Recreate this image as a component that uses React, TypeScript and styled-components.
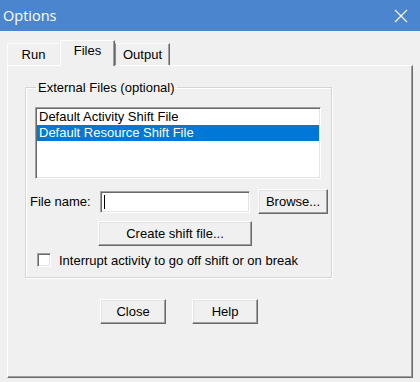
import React, { useState } from 'react'
import styled, { createGlobalStyle } from 'styled-components'

const GlobalStyle = createGlobalStyle`
  html, body {
    margin: 0;
    padding: 0;
    background: #f0f0f0;
  }
  * {
    box-sizing: border-box;
  }
`

const uiFont = `"Liberation Sans", Arial, sans-serif`

const Window = styled.div`
  display: flex;
  flex-direction: column;
  width: 420px;
  height: 382px;
  background: #f0f0f0;
  font-family: ${uiFont};
  font-size: 13px;
  color: #000;
  overflow: hidden;
`

const TitleBar = styled.div`
  display: flex;
  align-items: center;
  justify-content: space-between;
  height: 31px;
  padding: 0 12px 0 3px;
  background: #4a85cd;
  color: #fff;
  font-family: "Open Sans", "Noto Sans", sans-serif;
  font-size: 14.5px;
`

const CloseGlyph = styled.svg`
  width: 14px;
  height: 14px;
`

const Body = styled.div`
  display: flex;
  flex-direction: column;
  padding: 9px 7px 0 7px;
`

const TabStrip = styled.div`
  display: flex;
  align-items: flex-end;
  height: 25px;
  position: relative;
  z-index: 1;
`

const Tab = styled.div<{ $active?: boolean; $width: number }>`
  display: flex;
  align-items: center;
  justify-content: center;
  width: ${({ $width }) => $width}px;
  height: ${({ $active }) => ($active ? 26 : 22)}px;
  margin-bottom: ${({ $active }) => ($active ? -1 : 0)}px;
  padding-bottom: ${({ $active }) => ($active ? 6 : 1)}px;
  background: #f0f0f0;
  border-top: 1px solid ${({ $active }) => ($active ? '#fff' : '#fcfcfc')};
  border-left: 1px solid ${({ $active }) => ($active ? '#fff' : '#fcfcfc')};
  border-right: 1px solid ${({ $active }) => ($active ? '#696969' : '#e8e8e8')};
  box-shadow: ${({ $active }) => ($active ? 'inset -1px 0 0 #a0a0a0' : 'none')};
`

const OutputTab = styled(Tab)`
  border-left: 1px solid #8a8a8a;
  border-right: 1px solid #696969;
  box-shadow: inset -1px 0 0 #a0a0a0;
`

const Panel = styled.div`
  display: flex;
  flex-direction: column;
  height: 313px;
  padding: 14px 0 0 17px;
  border-top: 1px solid #fff;
  border-left: 1px solid #fff;
  border-right: 1px solid #696969;
  border-bottom: 1px solid #696969;
  box-shadow: inset -1px -1px 0 #a0a0a0;
`

const GroupBox = styled.fieldset`
  width: 307px;
  height: 198px;
  margin: 0;
  padding: 0;
  border: 1px solid #d5d5d5;
  box-shadow: inset 1px 1px 0 #fff, 1px 1px 0 #fff;
`

const Legend = styled.legend`
  margin-left: 10px;
  padding: 0 2px;
  line-height: 15px;
`

const GroupContent = styled.div`
  display: flex;
  flex-direction: column;
  padding: 12px 0 0 4px;
`

const ListBox = styled.div`
  display: flex;
  flex-direction: column;
  width: 286px;
  height: 72px;
  margin-left: 5px;
  padding: 1px;
  background: #fff;
  border-top: 1px solid #a0a0a0;
  border-left: 1px solid #a0a0a0;
  border-right: 1px solid #fff;
  border-bottom: 1px solid #fff;
  box-shadow: inset 1px 1px 0 #696969, inset -1px -1px 0 #e3e3e3;
`

const ListItem = styled.div<{ $selected?: boolean }>`
  height: 16px;
  line-height: 16px;
  padding-left: 2px;
  background: ${({ $selected }) => ($selected ? '#0078d7' : 'transparent')};
  color: ${({ $selected }) => ($selected ? '#fff' : '#000')};
  white-space: nowrap;
`

const FileRow = styled.div`
  display: flex;
  align-items: center;
  margin-top: 10px;
  height: 25px;
`

const FieldLabel = styled.span`
  width: 70px;
`

const TextInput = styled.div`
  width: 150px;
  height: 22px;
  margin-right: 8px;
  padding: 3px 3px;
  background: #fff;
  border-top: 1px solid #a0a0a0;
  border-left: 1px solid #a0a0a0;
  border-right: 1px solid #fff;
  border-bottom: 1px solid #fff;
  box-shadow: inset 1px 1px 0 #696969, inset -1px -1px 0 #e3e3e3;
`

const Caret = styled.div`
  width: 1px;
  height: 14px;
  background: #000;
`

const Button = styled.button<{ $width: number }>`
  width: ${({ $width }) => $width}px;
  height: 25px;
  padding: 0;
  background: #f0f0f0;
  font-family: ${uiFont};
  font-size: 13px;
  color: #000;
  border-top: 1px solid #fff;
  border-left: 1px solid #fff;
  border-right: 1px solid #696969;
  border-bottom: 1px solid #696969;
  box-shadow: inset -1px -1px 0 #a0a0a0, inset 1px 1px 0 #e3e3e3;
  cursor: default;
`

const CreateRow = styled.div`
  display: flex;
  margin-top: 7px;
  padding-left: 68px;
`

const CheckRow = styled.label`
  display: flex;
  align-items: center;
  gap: 8px;
  margin-top: 7px;
  padding-left: 7px;
  height: 14px;
`

const CheckBox = styled.span<{ $checked: boolean }>`
  display: flex;
  align-items: center;
  justify-content: center;
  width: 14px;
  height: 14px;
  background: #fff;
  border-top: 1px solid #a0a0a0;
  border-left: 1px solid #a0a0a0;
  border-right: 1px solid #fff;
  border-bottom: 1px solid #fff;
  box-shadow: inset 1px 1px 0 #696969, inset -1px -1px 0 #e3e3e3;
  font-size: 10px;
`

const ButtonRow = styled.div`
  display: flex;
  gap: 26px;
  margin-top: 21px;
  padding-left: 75px;
`

export default function App() {
  const [selected, setSelected] = useState(1)
  const [interrupt, setInterrupt] = useState(false)
  const files = ['Default Activity Shift File', 'Default Resource Shift File']

  return (
    <>
      <GlobalStyle />
      <Window>
        <TitleBar>
          <span>Options</span>
          <CloseGlyph viewBox="0 0 14 14">
            <path d="M1 1 L13 13 M13 1 L1 13" stroke="#fff" strokeWidth="1.1" fill="none" />
          </CloseGlyph>
        </TitleBar>
        <Body>
          <TabStrip>
            <Tab $width={53}>Run</Tab>
            <Tab $width={55} $active>
              Files
            </Tab>
            <OutputTab $width={55}>Output</OutputTab>
          </TabStrip>
          <Panel>
            <GroupBox>
              <Legend>External Files (optional)</Legend>
              <GroupContent>
                <ListBox>
                  {files.map((f, i) => (
                    <ListItem key={f} $selected={i === selected} onClick={() => setSelected(i)}>
                      {f}
                    </ListItem>
                  ))}
                </ListBox>
                <FileRow>
                  <FieldLabel>File name:</FieldLabel>
                  <TextInput>
                    <Caret />
                  </TextInput>
                  <Button $width={70}>Browse...</Button>
                </FileRow>
                <CreateRow>
                  <Button $width={154}>Create shift file...</Button>
                </CreateRow>
                <CheckRow onClick={() => setInterrupt(!interrupt)}>
                  <CheckBox $checked={interrupt}>{interrupt ? '✓' : ''}</CheckBox>
                  <span>Interrupt activity to go off shift or on break</span>
                </CheckRow>
              </GroupContent>
            </GroupBox>
            <ButtonRow>
              <Button $width={66}>Close</Button>
              <Button $width={66}>Help</Button>
            </ButtonRow>
          </Panel>
        </Body>
      </Window>
    </>
  )
}
